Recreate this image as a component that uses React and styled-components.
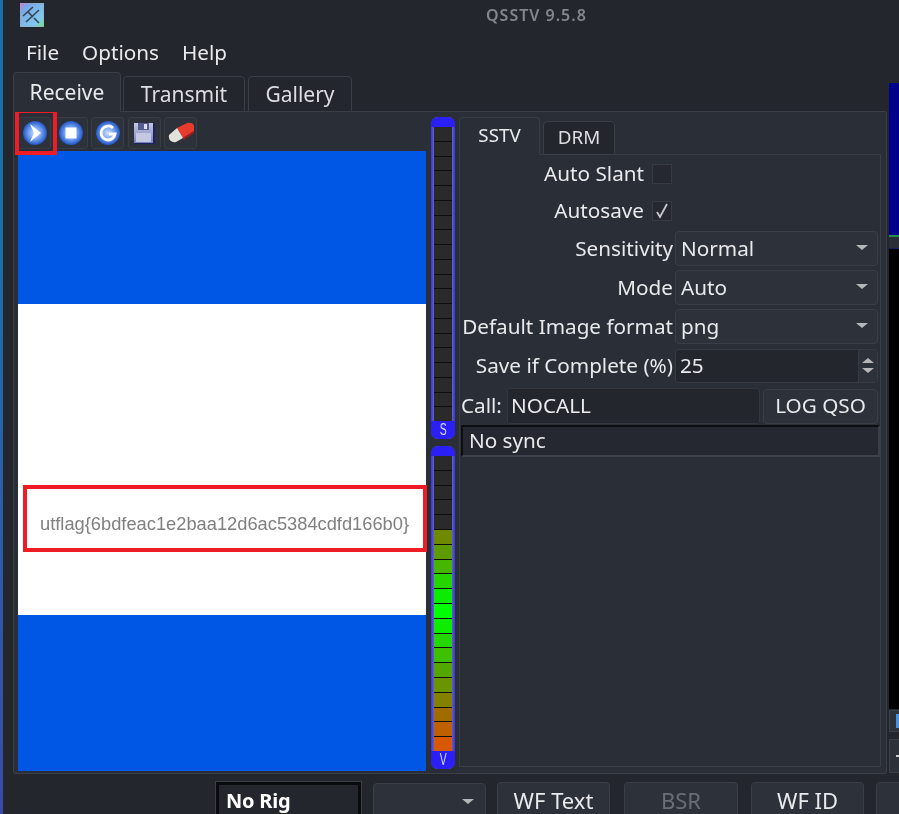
import React from "react";
import styled, { createGlobalStyle } from "styled-components";

const Global = createGlobalStyle`
  html, body { margin: 0; padding: 0; background: #23262d; }
  * { box-sizing: border-box; }
`;

const Screen = styled.div`
  position: relative;
  width: 899px;
  height: 814px;
  overflow: hidden;
  display: flex;
  background: #23262d;
  color: #e8eaec;
  font-family: "Noto Sans", sans-serif;
  font-size: 20.7px;
  filter: blur(0.3px);
`;
const EdgeStrip = styled.div`
  width: 3px;
  flex: none;
  background: linear-gradient(#1d6fa8 0, #1d6fa8 30%, #3b4aa6 100%);
`;
const Window = styled.div`
  flex: 1;
  min-width: 0;
  display: flex;
  flex-direction: column;
`;
const TitleBar = styled.div`
  height: 30px;
  flex: none;
  position: relative;
  display: flex;
  align-items: center;
  padding-left: 17px;
`;
const TitleText = styled.div`
  margin-left: 442px;
  font-size: 16px;
  font-weight: 600;
  color: #83868c;
  letter-spacing: 1px;
`;
const MenuBar = styled.div`
  height: 38px;
  flex: none;
  display: flex;
  align-items: center;
  gap: 23px;
  padding: 5px 0 0 23px;
`;
const MenuItem = styled.span`
  line-height: 26px;
`;
const Workspace = styled.div`
  height: 707px;
  flex: none;
  display: flex;
  padding-top: 4px;
`;
const Main = styled.div`
  width: 886px;
  flex: none;
  padding-left: 10px;
  padding-right: 2px;
  display: flex;
  flex-direction: column;
`;
const TabRow = styled.div`
  display: flex;
  align-items: flex-end;
  gap: ${(p) => p.$gap || 2}px;
  height: ${(p) => p.$h}px;
  flex: none;
  position: relative;
  z-index: 1;
  margin-bottom: -1px;
`;
const Tab = styled.div`
  width: ${(p) => p.$w}px;
  height: ${(p) => (p.$active ? p.$h : p.$h - 4)}px;
  margin-left: ${(p) => p.$ml || 0}px;
  padding-bottom: ${(p) => p.$pb}px;
  display: flex;
  align-items: center;
  justify-content: center;
  font-size: ${(p) => p.$fs}px;
  background: ${(p) => (p.$active ? "#2a2e37" : "#23262d")};
  border: 1px solid #3a3e47;
  border-bottom: ${(p) => (p.$active ? "1px solid #2a2e37" : "1px solid #3a3e47")};
  border-radius: 4px 4px 0 0;
  color: ${(p) => (p.$active ? "#e8eaec" : "#dcdee2")};
`;
const OuterPane = styled.div`
  height: 663px;
  flex: none;
  background: #2a2e37;
  border: 1px solid #3a3e47;
  border-radius: 2px;
  padding: 5px 5px 2px 4px;
  display: flex;
`;
const ReceiveColumn = styled.div`
  width: 408px;
  flex: none;
  display: flex;
  flex-direction: column;
  position: relative;
`;
const Toolbar = styled.div`
  height: 34px;
  flex: none;
  display: flex;
  gap: 3.6px;
`;
const ToolButton = styled.div`
  width: 33px;
  height: 32px;
  display: flex;
  align-items: center;
  justify-content: center;
  background: #2d313a;
  border: 1px solid #393d46;
  border-radius: 3px;
`;
const Picture = styled.div`
  height: 620px;
  flex: none;
  display: flex;
  flex-direction: column;
`;
const BlueBand = styled.div`
  height: ${(p) => p.$h}px;
  flex: none;
  background: #0057e6;
`;
const WhiteBand = styled.div`
  height: 311px;
  flex: none;
  background: #fff;
  position: relative;
  display: flex;
  align-items: flex-start;
  padding: 210px 0 0 22px;
`;
const FlagText = styled.div`
  font-family: "Liberation Sans", Arial, sans-serif;
  font-size: 18.3px;
  line-height: 20px;
  color: #808080;
  white-space: nowrap;
  filter: blur(0.4px);
`;
const RedBox = styled.div`
  position: absolute;
  border: 4px solid #ee1c25;
  pointer-events: none;
  left: ${(p) => p.$l}px;
  top: ${(p) => p.$t}px;
  width: ${(p) => p.$w}px;
  height: ${(p) => p.$h}px;
`;
const MeterColumn = styled.div`
  width: 24px;
  flex: none;
  margin-left: 5px;
  display: flex;
  flex-direction: column;
  gap: 7px;
`;
const Meter = styled.div`
  height: ${(p) => p.$h}px;
  flex: none;
  display: flex;
  flex-direction: column;
  background: linear-gradient(90deg, #3a34d0 0, #7b78d8 20%, #7b78d8 80%, #3a34d0 100%);
  border-radius: 7px;
  overflow: hidden;
`;
const MeterCap = styled.div`
  height: ${(p) => p.$h}px;
  flex: none;
  background: #2a20f5;
  color: #d8dcff;
  font-family: "Liberation Sans", sans-serif;
  font-size: 16px;
  line-height: ${(p) => p.$h}px;
  text-align: center;
`;
const CapLetter = styled.span`
  display: inline-block;
  transform: scaleX(0.65);
`;
const MeterTrack = styled.div`
  flex: 1;
  display: flex;
  flex-direction: column;
  padding: 0 3px;
`;
const Segment = styled.div`
  flex: 1;
  background: ${(p) => p.$c};
  border-bottom: 1px solid #0e0e0e;
  &:last-child { border-bottom: 0; }
`;
const SidePanel = styled.div`
  width: 422px;
  flex: none;
  margin-left: 4px;
  display: flex;
  flex-direction: column;
  height: 650px;
`;
const InnerPane = styled.div`
  height: 613px;
  flex: none;
  background: #2a2e37;
  border: 1px solid #3a3e47;
  padding: 0 2px 0 1px;
  display: flex;
  flex-direction: column;
`;
const CheckRow = styled.div`
  height: 37px;
  flex: none;
  display: flex;
  align-items: center;
  justify-content: flex-end;
  gap: 8px;
  padding-right: 206px;
`;
const CheckLabel = styled.span`
  padding-bottom: 2px;
`;
const CheckBox = styled.div`
  width: 20px;
  height: 20px;
  display: flex;
  align-items: center;
  justify-content: center;
  background: #252830;
  border: 1px solid #363a43;
  color: #c8cacd;
`;
const FieldRow = styled.div`
  height: 39px;
  flex: none;
  display: grid;
  grid-template-columns: 212px 203px;
  column-gap: 2px;
  align-items: center;
`;
const FieldLabel = styled.div`
  text-align: right;
  white-space: nowrap;
  padding-bottom: 2px;
`;
const Combo = styled.div`
  height: 35px;
  display: flex;
  align-items: center;
  justify-content: space-between;
  padding: 0 9px 2px 5px;
  background: #2d313a;
  border: 1px solid #3a3e47;
  border-radius: 4px;
`;
const Arrow = styled.span`
  width: 0;
  height: 0;
  border-left: 6px solid transparent;
  border-right: 6px solid transparent;
  border-${(p) => (p.$up ? "bottom" : "top")}: 5px solid #b4b6ba;
`;
const Spin = styled.div`
  height: 34px;
  display: flex;
  background: #23262d;
  border: 1px solid #363a43;
  border-radius: 3px;
  align-items: center;
  justify-content: space-between;
  padding-left: 4px;
`;
const SpinValue = styled.span`
  padding-bottom: 2px;
`;
const SpinArrows = styled.div`
  width: 19px;
  height: 100%;
  display: flex;
  flex-direction: column;
  align-items: center;
  justify-content: center;
  gap: 5px;
  background: #2d313a;
  border-left: 1px solid #363a43;
`;
const CallRow = styled.div`
  height: 40px;
  flex: none;
  padding-top: 2px;
  display: flex;
  align-items: center;
`;
const CallLabel = styled.div`
  width: 46px;
  flex: none;
  padding-bottom: 3px;
`;
const CallInput = styled.div`
  width: 253px;
  height: 36px;
  flex: none;
  display: flex;
  align-items: center;
  padding: 0 0 3px 3px;
  background: #23262d;
  border: 1px solid #32363e;
  border-radius: 3px;
`;
const PushButton = styled.div`
  width: ${(p) => p.$w}px;
  height: ${(p) => p.$h || 35}px;
  margin-left: ${(p) => p.$ml || 0}px;
  padding-bottom: ${(p) => p.$pb || 0}px;
  flex: none;
  display: flex;
  align-items: center;
  justify-content: center;
  font-size: ${(p) => p.$fs || 20.7}px;
  background: #2d313a;
  border: 1px solid #3a3e47;
  border-radius: 4px;
  color: ${(p) => (p.$off ? "#6b6e74" : "#e8eaec")};
`;
const StatusLine = styled.div`
  height: 32px;
  flex: none;
  margin-right: -2px;
  display: flex;
  align-items: center;
  padding: 0 0 2px 6px;
  background: #252830;
  border-top: 2px solid #0d0e11;
  border-left: 2px solid #0d0e11;
  border-right: 2px solid #3a3e47;
  border-bottom: 2px solid #3e424c;
`;
const SideColumn = styled.div`
  flex: 1;
  min-width: 0;
  display: flex;
  flex-direction: column;
  padding-top: 11px;
`;
const Waterfall = styled.div`
  height: 154px;
  flex: none;
  background: #00008c;
  border-bottom: 2px solid #1f8f4a;
`;
const SideGap = styled.div`
  height: 11px;
  flex: none;
  background: #2a2e37;
`;
const SideBlack = styled.div`
  height: 461px;
  flex: none;
  background: #000;
  border-top: 1px solid #14206a;
`;
const SideTool = styled.div`
  height: ${(p) => p.$h}px;
  margin-top: ${(p) => p.$mt}px;
  flex: none;
  background: #2d313a;
  border: 1px solid #3a3e47;
  border-right: 0;
  display: flex;
  align-items: center;
  justify-content: flex-end;
`;
const SideMark = styled.span`
  width: 3px;
  height: ${(p) => p.$h}px;
  background: ${(p) => p.$c};
`;
const BottomBar = styled.div`
  flex: 1;
  display: flex;
  align-items: flex-start;
  padding: 7px 0 0 213px;
  white-space: nowrap;
`;
const RigBox = styled.div`
  width: 145px;
  height: 40px;
  flex: none;
  padding: 2px 0 0 7px;
  font-size: 20px;
  letter-spacing: -0.2px;
  font-weight: 700;
  color: #fff;
  background: #23262d;
  border-top: 3px solid #0a0b0d;
  border-left: 3px solid #0a0b0d;
  border-right: 3px solid #0a0b0d;
  outline: 1px solid #3a3e47;
`;
const BarCombo = styled.div`
  width: 113px;
  height: 36px;
  margin-left: 12px;
  margin-top: 1px;
  flex: none;
  display: flex;
  align-items: center;
  justify-content: flex-end;
  padding-right: 11px;
  background: #2d313a;
  border: 1px solid #3a3e47;
  border-radius: 4px;
`;

const Ball = ({ id, children }) => (
  <svg width="26" height="26" viewBox="0 0 26 26">
    <defs>
      <radialGradient id={id} cx="50%" cy="50%" r="52%">
        <stop offset="0" stopColor="#d4e2ff" />
        <stop offset="0.55" stopColor="#6c9cf0" />
        <stop offset="1" stopColor="#1c4fc0" />
      </radialGradient>
    </defs>
    <circle cx="13" cy="13" r="12" fill={`url(#${id})`} />
    {children}
  </svg>
);

const AppIcon = () => (
  <svg width="24" height="24" viewBox="0 0 24 24">
    <defs>
      <linearGradient id="appg" x1="0" y1="0" x2="1" y2="1">
        <stop offset="0" stopColor="#e070d8" />
        <stop offset="0.2" stopColor="#78a8e8" />
        <stop offset="0.75" stopColor="#80c8f0" />
        <stop offset="1" stopColor="#70e878" />
      </linearGradient>
    </defs>
    <rect width="24" height="24" fill="url(#appg)" stroke="#a4a8ae" />
    <path d="M3 13 L13 4 M6 19 L19 7 M8 9 L13 14 M14 15 L19 20" stroke="#3a4450" strokeWidth="1.6" fill="none" />
  </svg>
);

const FloppyIcon = () => (
  <svg width="24" height="24" viewBox="0 0 24 24">
    <defs>
      <linearGradient id="flop" x1="0" y1="0" x2="0" y2="1">
        <stop offset="0" stopColor="#c4c8e4" />
        <stop offset="1" stopColor="#7a80b8" />
      </linearGradient>
    </defs>
    <path d="M3 2 H23 V23 H3 Z" fill="#1c2260" />
    <rect x="2" y="2" width="19" height="20" fill="url(#flop)" />
    <rect x="6" y="2" width="11" height="7" fill="#565c90" />
    <rect x="12" y="3" width="3" height="5" fill="#dcdff0" />
    <rect x="4" y="12" width="15" height="9" fill="#c4c8e2" />
  </svg>
);

const EraserIcon = () => (
  <svg width="28" height="24" viewBox="0 0 28 24">
    <path d="M10 7 L20 2 C23 1 27 2 27 5 L27 10 L16 17 Z" fill="#e93a2e" />
    <path d="M16 17 L27 10 L27 12 L17 19 Z" fill="#9c1f1a" />
    <path d="M2 14 L10 7 L16 17 L9 21 C5 22 1 19 2 14 Z" fill="#e2e2dc" />
  </svg>
);

const CheckMark = () => (
  <svg width="14" height="16" viewBox="0 0 14 16">
    <path d="M2 9 L5 14 L12 1" fill="none" stroke="#c8cacd" strokeWidth="1.8" />
  </svg>
);

const level = [
  "#6e8a00", "#5c9c00", "#46b600", "#26d400", "#0cec00",
  "#00ff00", "#0eec00", "#26d600", "#3cc000", "#52a800",
  "#6a9400", "#848000", "#a06c00", "#bc6000", "#d85800",
];
const dark = "#2b2a2a";
const topSegments = Array.from({ length: 20 }, () => dark);
const bottomSegments = [...Array.from({ length: 5 }, () => dark), ...level];

const fields = [
  ["Sensitivity", "Normal"],
  ["Mode", "Auto"],
  ["Default Image format", "png"],
];

export default function App() {
  return (
    <Screen>
      <Global />
      <EdgeStrip />
      <Window>
        <TitleBar>
          <AppIcon />
          <TitleText>QSSTV 9.5.8</TitleText>
        </TitleBar>
        <MenuBar>
          <MenuItem>File</MenuItem>
          <MenuItem>Options</MenuItem>
          <MenuItem>Help</MenuItem>
        </MenuBar>
        <Workspace>
          <Main>
            <TabRow $h={40}>
              <Tab $active $w={108} $h={40} $fs={21} $pb={1}>Receive</Tab>
              <Tab $w={122} $h={40} $fs={21} $pb={1}>Transmit</Tab>
              <Tab $w={104} $h={40} $fs={21} $pb={1} $ml={1}>Gallery</Tab>
            </TabRow>
            <OuterPane>
              <ReceiveColumn>
                <Toolbar>
                  <ToolButton>
                    <Ball id="b1"><path d="M8 4 L19 13 L8 22 L12 13 Z" fill="#fff" /></Ball>
                  </ToolButton>
                  <ToolButton>
                    <Ball id="b2"><rect x="7.5" y="7.5" width="11" height="11" fill="#fff" /></Ball>
                  </ToolButton>
                  <ToolButton>
                    <Ball id="b3">
                      <path d="M18 8 A7 7 0 1 0 20 14 L14 14" fill="none" stroke="#fff" strokeWidth="2.8" />
                    </Ball>
                  </ToolButton>
                  <ToolButton><FloppyIcon /></ToolButton>
                  <ToolButton><EraserIcon /></ToolButton>
                </Toolbar>
                <Picture>
                  <BlueBand $h={153} />
                  <WhiteBand>
                    <FlagText>utflag{"{"}6bdfeac1e2baa12d6ac5384cdfd166b0{"}"}</FlagText>
                    <RedBox $l={5} $t={181} $w={404} $h={67} />
                  </WhiteBand>
                  <BlueBand $h={156} />
                </Picture>
                <RedBox $l={-3} $t={-8} $w={42} $h={46} />
              </ReceiveColumn>
              <MeterColumn>
                <Meter $h={322}>
                  <MeterCap $h={10} />
                  <MeterTrack>
                    {topSegments.map((c, i) => <Segment key={i} $c={c} />)}
                  </MeterTrack>
                  <MeterCap $h={18}><CapLetter>S</CapLetter></MeterCap>
                </Meter>
                <Meter $h={323}>
                  <MeterCap $h={10} />
                  <MeterTrack>
                    {bottomSegments.map((c, i) => <Segment key={i} $c={c} />)}
                  </MeterTrack>
                  <MeterCap $h={18}><CapLetter>V</CapLetter></MeterCap>
                </Meter>
              </MeterColumn>
              <SidePanel>
                <TabRow $h={38} $gap={3}>
                  <Tab $active $w={81} $h={38} $fs={18.8} $pb={3}>SSTV</Tab>
                  <Tab $w={72} $h={38} $fs={18.8} $pb={2}>DRM</Tab>
                </TabRow>
                <InnerPane>
                  <CheckRow><CheckLabel>Auto Slant</CheckLabel><CheckBox /></CheckRow>
                  <CheckRow><CheckLabel>Autosave</CheckLabel><CheckBox><CheckMark /></CheckBox></CheckRow>
                  {fields.map(([label, value]) => (
                    <FieldRow key={label}>
                      <FieldLabel>{label}</FieldLabel>
                      <Combo>{value}<Arrow /></Combo>
                    </FieldRow>
                  ))}
                  <FieldRow>
                    <FieldLabel>Save if Complete (%)</FieldLabel>
                    <Spin><SpinValue>25</SpinValue><SpinArrows><Arrow $up /><Arrow /></SpinArrows></Spin>
                  </FieldRow>
                  <CallRow>
                    <CallLabel>Call:</CallLabel>
                    <CallInput>NOCALL</CallInput>
                    <PushButton $w={115} $ml={3} $pb={3}>LOG QSO</PushButton>
                  </CallRow>
                  <StatusLine>No sync</StatusLine>
                </InnerPane>
              </SidePanel>
            </OuterPane>
          </Main>
          <SideColumn>
            <Waterfall />
            <SideGap />
            <SideBlack />
            <SideTool $h={22} $mt={1}><SideMark $h={14} $c="#4a90e0" /></SideTool>
            <SideTool $h={34} $mt={7}><SideMark $h={2} $c="#c8cacd" /></SideTool>
          </SideColumn>
        </Workspace>
        <BottomBar>
          <RigBox>No Rig</RigBox>
          <BarCombo><Arrow /></BarCombo>
          <PushButton $w={113} $h={36} $ml={11} $fs={22}>WF Text</PushButton>
          <PushButton $w={114} $h={36} $ml={14} $fs={22} $off>BSR</PushButton>
          <PushButton $w={113} $h={36} $ml={13} $fs={22}>WF ID</PushButton>
          <PushButton $w={60} $h={36} $ml={12} />
        </BottomBar>
      </Window>
    </Screen>
  );
}
